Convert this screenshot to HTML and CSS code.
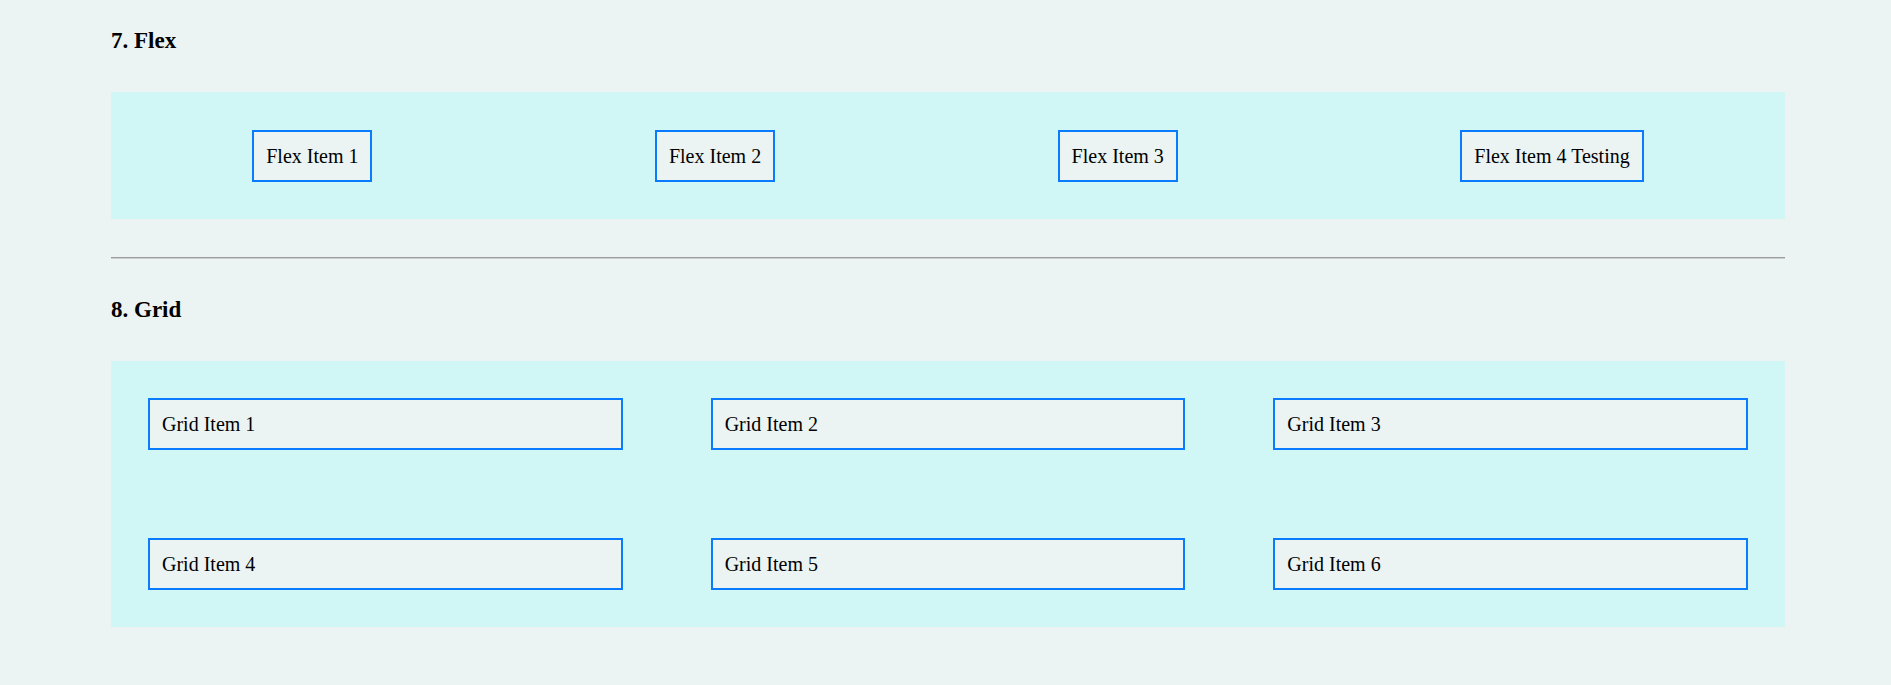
FILE: index.html
```html
<!DOCTYPE html>
<html>
<head>
<meta charset="utf-8">
<link rel="stylesheet" href="styles.css">
</head>
<body>
<main class="page">
  <h3 class="title">7. Flex</h3>
  <div class="flex-box">
    <div class="item">Flex Item 1</div>
    <div class="item">Flex Item 2</div>
    <div class="item">Flex Item 3</div>
    <div class="item">Flex Item 4 Testing</div>
  </div>
  <hr class="rule">
  <h3 class="title">8. Grid</h3>
  <div class="grid-box">
    <div class="item">Grid Item 1</div>
    <div class="item">Grid Item 2</div>
    <div class="item">Grid Item 3</div>
    <div class="item">Grid Item 4</div>
    <div class="item">Grid Item 5</div>
    <div class="item">Grid Item 6</div>
  </div>
</main>
</body>
</html>
```
FILE: styles.css
```css
html, body {
  margin: 0;
  padding: 0;
}
body {
  background: #ebf4f3;
  color: #000;
  font-family: "Liberation Serif", "Times New Roman", serif;
  font-size: 20px;
}
.page {
  width: 1674px;
  margin-left: 111px;
  padding-top: 28px;
  padding-bottom: 40px;
}
.title {
  margin: 0 0 38px 0;
  font-size: 23px;
  line-height: 26px;
  font-weight: bold;
}
.flex-box {
  display: flex;
  justify-content: space-around;
  align-items: center;
  padding: 37.5px 0;
  background: #d0f7f6;
}
.item {
  border: 2px solid #0a7bff;
  background: #ebf4f3;
  padding: 12px 12px;
  line-height: 24px;
}
.rule {
  margin: 38px 0 38px 0;
  height: 0;
  border: 0;
  border-top: 1px solid #9d9d9d;
  border-bottom: 1px solid #c9cfce;
}
.grid-box {
  display: grid;
  grid-template-columns: repeat(3, 1fr);
  column-gap: 88px;
  row-gap: 88px;
  padding: 37px;
  background: #d0f7f6;
}
```
